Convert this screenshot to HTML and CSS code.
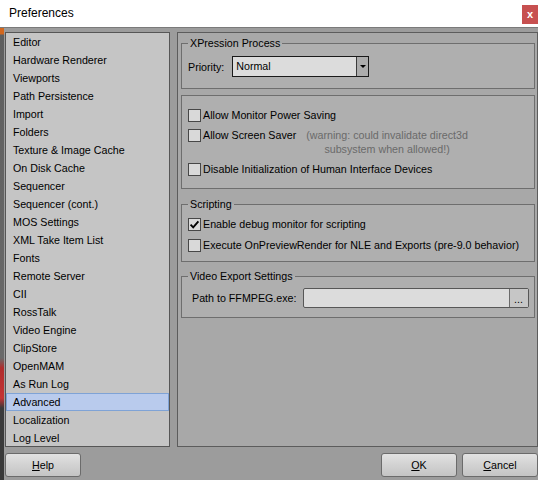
FILE: index.html
```html
<!DOCTYPE html>
<html>
<head>
<meta charset="utf-8">
<title>Preferences</title>
<link rel="stylesheet" href="styles.css">
</head>
<body>
<div class="window">
  <div class="titlebar">
    <span class="title">Preferences</span>
    <span class="close">x</span>
  </div>
  <div class="frame">
    <div class="edge"></div>
    <div class="dialog">
      <div class="main">
        <ul class="nav">
          <li>Editor</li>
          <li>Hardware Renderer</li>
          <li>Viewports</li>
          <li>Path Persistence</li>
          <li>Import</li>
          <li>Folders</li>
          <li>Texture &amp; Image Cache</li>
          <li>On Disk Cache</li>
          <li>Sequencer</li>
          <li>Sequencer (cont.)</li>
          <li>MOS Settings</li>
          <li>XML Take Item List</li>
          <li>Fonts</li>
          <li>Remote Server</li>
          <li>CII</li>
          <li>RossTalk</li>
          <li>Video Engine</li>
          <li>ClipStore</li>
          <li>OpenMAM</li>
          <li>As Run Log</li>
          <li class="selected">Advanced</li>
          <li>Localization</li>
          <li>Log Level</li>
        </ul>
        <div class="panel">
          <fieldset class="group g1">
            <legend>XPression Process</legend>
            <div class="field">
              <span class="label">Priority:</span>
              <div class="combo">
                <span class="combo-value">Normal</span>
                <span class="combo-btn"><span class="arrow"></span></span>
              </div>
            </div>
          </fieldset>
          <fieldset class="group g2">
            <div class="check"><span class="box"></span><span>Allow Monitor Power Saving</span></div>
            <div class="check top"><span class="box"></span><span>Allow Screen Saver</span><span class="warn">(warning: could invalidate direct3d<br>subsystem when allowed!)</span></div>
            <div class="check"><span class="box"></span><span>Disable Initialization of Human Interface Devices</span></div>
          </fieldset>
          <fieldset class="group g3">
            <legend>Scripting</legend>
            <div class="check"><span class="box"><svg width="11" height="11" viewBox="0 0 11 11"><path d="M1.6 5.6 L4.2 8.3 L9.4 2.4" fill="none" stroke="#000" stroke-width="1.9"/></svg></span><span>Enable debug monitor for scripting</span></div>
            <div class="check"><span class="box"></span><span>Execute OnPreviewRender for NLE and Exports (pre-9.0 behavior)</span></div>
          </fieldset>
          <fieldset class="group g4">
            <legend>Video Export Settings</legend>
            <div class="field">
              <span class="label">Path to FFMPEG.exe:</span>
              <div class="path">
                <span class="path-value"></span>
                <span class="path-btn">...</span>
              </div>
            </div>
          </fieldset>
        </div>
      </div>
      <div class="footer">
        <button class="btn"><u>H</u>elp</button>
        <span class="spacer"></span>
        <button class="btn"><u>O</u>K</button>
        <button class="btn"><u>C</u>ancel</button>
      </div>
    </div>
  </div>
</div>
</body>
</html>
```
FILE: styles.css
```css
* { box-sizing: border-box; }
html, body { margin: 0; padding: 0; }
body {
  font-family: "Liberation Sans", Arial, sans-serif;
  font-size: 10.7px;
  color: #000;
  background: #9c9c9c;
}
.window {
  width: 538px;
  height: 480px;
  display: flex;
  flex-direction: column;
  overflow: hidden;
}
.titlebar {
  height: 28px;
  background: #fff;
  display: flex;
  align-items: flex-start;
  justify-content: space-between;
  border-bottom: 1px solid #7a7a7a;
}
.title {
  font-size: 12px;
  line-height: 14px;
  margin: 6px 0 0 9px;
}
.close {
  width: 16px;
  height: 19px;
  margin-top: 5px;
  background: #c75050;
  color: #fff;
  font-weight: bold;
  font-size: 11px;
  line-height: 18px;
  text-align: center;
}
.frame {
  flex: 1;
  display: flex;
  min-height: 0;
}
.edge {
  width: 4px;
  background: linear-gradient(to bottom, #d2671e 0, #d2671e 6px, #5e5e5e 7px, #6a6a6a 330px, #b02c2c 340px, #c53434 370px, #3a3a3a 380px, #3a3a3a 100%);
}
.dialog {
  flex: 1;
  display: flex;
  flex-direction: column;
  padding: 4px 0 0 1px;
  background: #9c9c9c;
}
.main {
  display: flex;
  gap: 7px;
  height: 415px;
}
.nav {
  list-style: none;
  margin: 0;
  padding: 0;
  width: 165px;
  height: 415px;
  overflow: hidden;
  background: #c5c5c5;
  border: 1px solid #565656;
}
.nav li {
  height: 18px;
  line-height: 18px;
  padding-left: 7px;
  white-space: nowrap;
}
.nav li.selected {
  background: #b9cbed;
  border: 1px solid #7fa3d6;
  line-height: 16px;
  padding-left: 6px;
}
.panel {
  width: 361px;
  height: 415px;
  background: #a8a8a8;
  border: 1px solid #5c5c5c;
  display: flex;
  flex-direction: column;
  padding: 0 2px 0 3px;
}
.group {
  margin: 0;
  min-width: 0;
  border: 1px solid #6e6e6e;
  background: #afafaf;
}
.group legend {
  line-height: 14px;
  padding: 0 2px;
  font-size: 10.7px;
}
.g1 { margin-top: 3px; padding: 6px 6px 11px 6px; }
.g2 { margin-top: 6px; padding: 12px 6px 12px 6px; display: flex; flex-direction: column; gap: 6px; }
.g3 { margin-top: 8px; padding: 6px 6px 9px 6px; display: flex; flex-direction: column; gap: 7px; }
.g4 { margin-top: 7px; padding: 5px 6px 9px 10px; }
.g4 legend { margin-left: -4px; }
.field {
  display: flex;
  align-items: center;
  white-space: nowrap;
}
.label { flex: none; }
.combo {
  flex: none;
  margin-left: 8px;
  width: 137px;
  height: 21px;
  display: flex;
  background: #dcdcdc;
  border: 1px solid #1a1a1a;
}
.combo-value {
  flex: 1;
  padding-left: 3px;
  line-height: 19px;
}
.combo-btn {
  width: 12px;
  border-left: 1px solid #3a3a3a;
  background: #acacac;
  display: flex;
  align-items: center;
  justify-content: center;
}
.arrow {
  width: 0;
  height: 0;
  border-left: 3px solid transparent;
  border-right: 3px solid transparent;
  border-top: 3px solid #000;
}
.check {
  display: flex;
  align-items: center;
  line-height: 14px;
  height: 14px;
  white-space: nowrap;
}
.check.top {
  align-items: flex-start;
  height: 28px;
}
.check.top .box { margin-top: 1px; }
.box {
  width: 13px;
  height: 13px;
  flex: none;
  border: 1px solid #474747;
  background: #d9d9d9;
  margin-right: 2px;
  display: flex;
  align-items: center;
  justify-content: center;
}
.box svg { display: block; }
.warn {
  color: #6a6a6a;
  text-align: center;
  margin-left: 10px;
  line-height: 14px;
}
.path {
  flex: none;
  margin-left: 6px;
  width: 226px;
  height: 20px;
  display: flex;
  background: #dcdcdc;
  border: 1px solid #575757;
  border-radius: 2px;
}
.path-value { flex: 1; }
.path-btn {
  width: 19px;
  border-left: 1px solid #6a6a6a;
  background: #c6c6c6;
  text-align: center;
  line-height: 20px;
}
.footer {
  display: flex;
  gap: 5px;
  padding-top: 6px;
}
.spacer { flex: 1; }
.btn {
  width: 76px;
  height: 24px;
  font-family: "Liberation Sans", Arial, sans-serif;
  font-size: 10.7px;
  color: #000;
  padding: 0;
  border: 1px solid #6b6b6b;
  border-radius: 3px;
  background: linear-gradient(to bottom, #e2e2e2 0%, #d2d2d2 50%, #c4c4c4 100%);
}
```
